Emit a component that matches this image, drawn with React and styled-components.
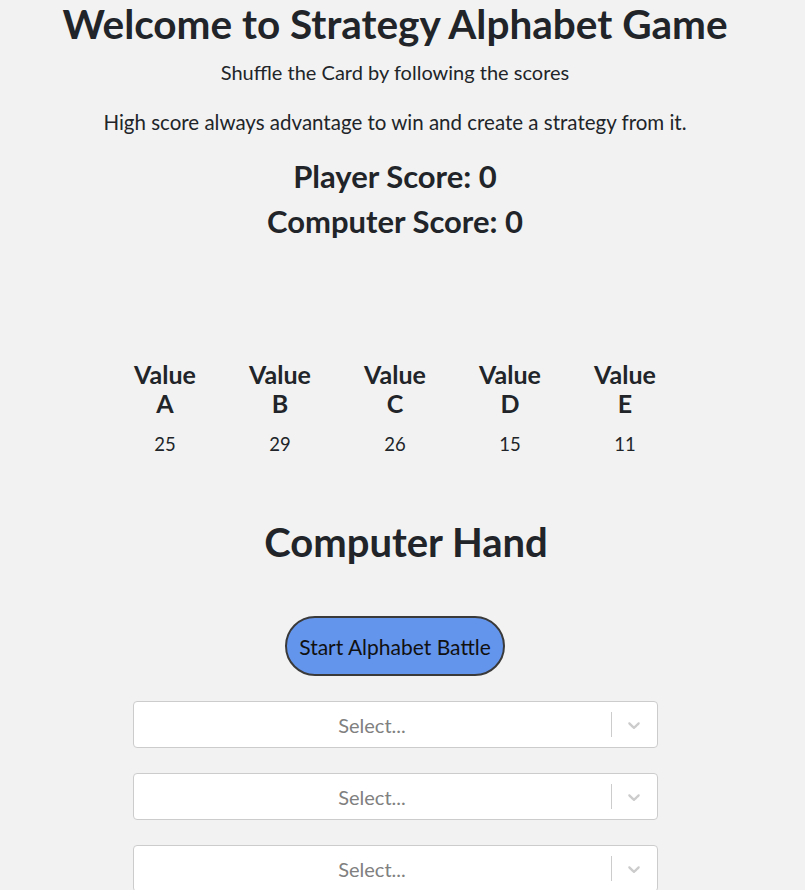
import React from "react";
import styled, { createGlobalStyle } from "styled-components";

const GlobalStyle = createGlobalStyle`
  html, body {
    margin: 0;
    padding: 0;
    background: #f2f2f2;
  }
  body {
    font-family: Lato, "Noto Sans", "Liberation Sans", sans-serif;
    color: #212529;
  }
`;

const Page = styled.div`
  display: flex;
  flex-direction: column;
  align-items: center;
  padding: 0 15px 40px 0;
`;

const Title = styled.h1`
  margin: 0;
  font-size: 40.5px;
  line-height: 48px;
  font-weight: 700;
  text-align: center;
`;

const Text = styled.p`
  margin: ${(p) => p.$mt}px 0 0;
  font-size: ${(p) => p.$fs}px;
  line-height: 24px;
  text-align: center;
`;

const Score = styled.h2`
  margin: ${(p) => p.$mt}px 0 0;
  font-size: 31px;
  line-height: 36px;
  font-weight: 700;
  text-align: center;
`;

const ValueGrid = styled.div`
  margin-top: 121px;
  display: grid;
  grid-template-columns: repeat(5, 115px);
`;

const ValueCol = styled.div`
  display: flex;
  flex-direction: column;
  align-items: center;
  text-align: center;
`;

const ValueLabel = styled.div`
  font-size: 25px;
  line-height: 29px;
  font-weight: 700;
`;

const ValueNumber = styled.div`
  margin-top: 14px;
  font-size: 18.5px;
  line-height: 24px;
`;

const HandTitle = styled(Title)`
  margin-top: 62px;
  padding-left: 22px;
  font-size: 40px;
`;

const BattleButton = styled.button`
  margin-top: 50px;
  width: 220px;
  height: 60px;
  border-radius: 30px;
  border: 2px solid #3a3a3a;
  background: #6495ed;
  color: #111;
  font-family: inherit;
  font-size: 21px;
  cursor: pointer;
`;

const SelectList = styled.div`
  margin-top: 25px;
  display: flex;
  flex-direction: column;
  gap: 25px;
  width: 525px;
`;

const SelectBox = styled.div`
  box-sizing: border-box;
  height: 47px;
  display: flex;
  align-items: center;
  background: #fff;
  border: 1px solid #cccccc;
  border-radius: 4px;
`;

const Placeholder = styled.div`
  flex: 1;
  text-align: center;
  color: #808080;
  font-size: 20px;
`;

const Separator = styled.span`
  align-self: center;
  width: 1px;
  height: 25px;
  background: #cccccc;
`;

const Indicator = styled.div`
  width: 45px;
  display: flex;
  justify-content: center;
  align-items: center;
  color: #cccccc;
`;

const Chevron = () => (
  <svg width="20" height="20" viewBox="0 0 20 20" fill="currentColor">
    <path d="M4.516 7.548c0.436-0.446 1.043-0.481 1.576 0l3.908 3.747 3.908-3.747c0.533-0.481 1.141-0.446 1.574 0 0.436 0.445 0.408 1.197 0 1.615-0.406 0.418-4.695 4.502-4.695 4.502-0.217 0.223-0.502 0.335-0.787 0.335s-0.57-0.112-0.789-0.335c0 0-4.287-4.084-4.695-4.502s-0.436-1.17 0-1.615z" />
  </svg>
);

const values = [
  { k: "A", v: 25 },
  { k: "B", v: 29 },
  { k: "C", v: 26 },
  { k: "D", v: 15 },
  { k: "E", v: 11 },
];

export default function App() {
  return (
    <>
      <GlobalStyle />
      <Page>
        <Title>Welcome to Strategy Alphabet Game</Title>
        <Text $mt={12} $fs={20}>
          Shuffle the Card by following the scores
        </Text>
        <Text $mt={26} $fs={20.5}>
          High score always advantage to win and create a strategy from it.
        </Text>
        <Score $mt={24}>Player Score: 0</Score>
        <Score $mt={9}>Computer Score: 0</Score>
        <ValueGrid>
          {values.map((x) => (
            <ValueCol key={x.k}>
              <ValueLabel>
                Value
                <br />
                {x.k}
              </ValueLabel>
              <ValueNumber>{x.v}</ValueNumber>
            </ValueCol>
          ))}
        </ValueGrid>
        <HandTitle>Computer Hand</HandTitle>
        <BattleButton>Start Alphabet Battle</BattleButton>
        <SelectList>
          {[0, 1, 2, 3, 4].map((i) => (
            <SelectBox key={i}>
              <Placeholder>Select...</Placeholder>
              <Separator />
              <Indicator>
                <Chevron />
              </Indicator>
            </SelectBox>
          ))}
        </SelectList>
      </Page>
    </>
  );
}
